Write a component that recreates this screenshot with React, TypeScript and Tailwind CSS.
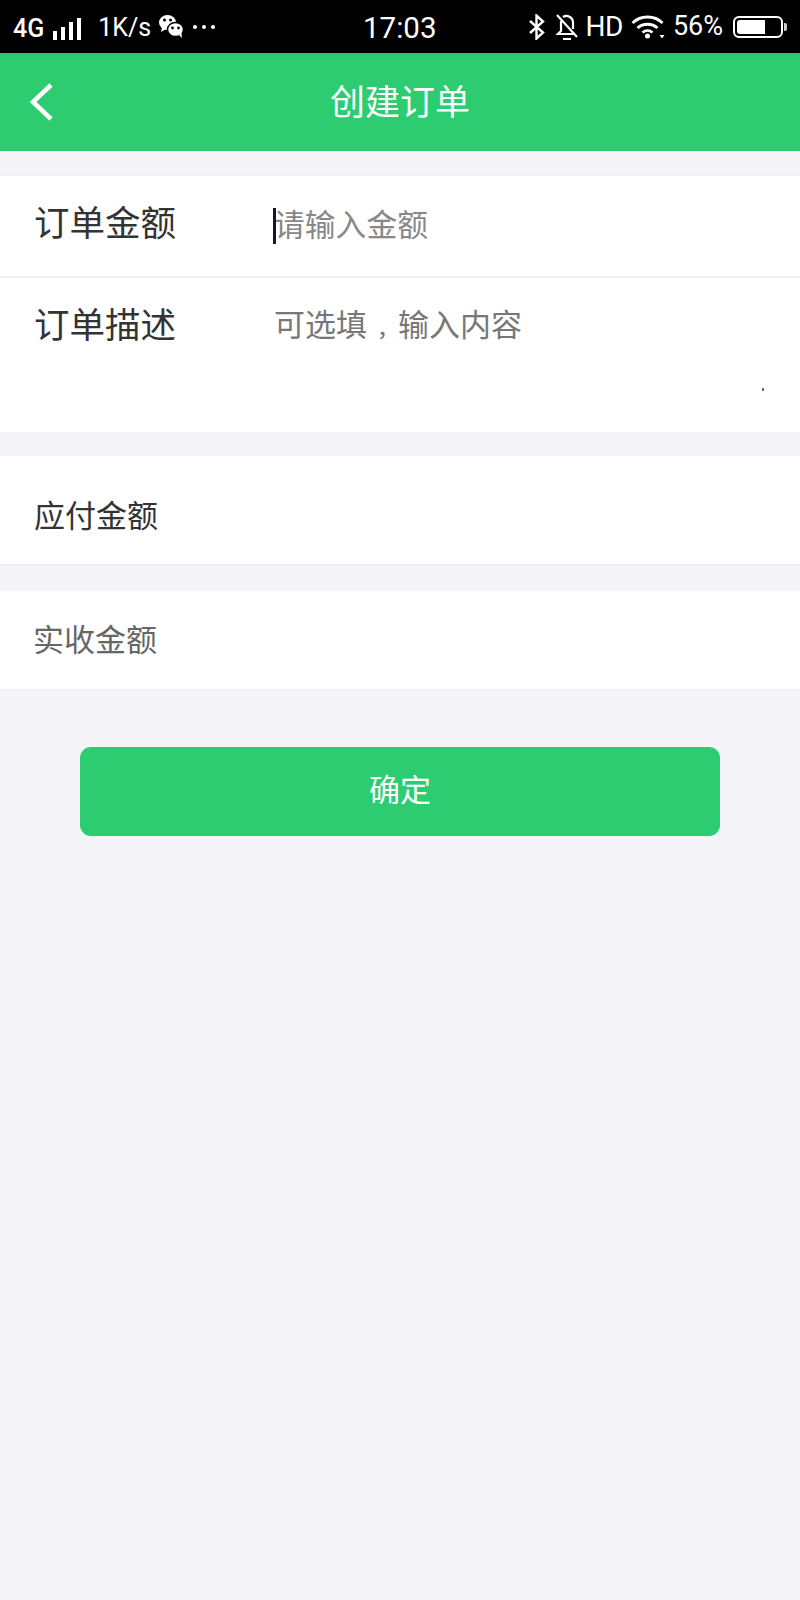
import React from "react";

const cjk = { fontFamily: '"Noto Sans CJK SC", "Noto Sans", sans-serif' };

function WeChat() {
  return (
    <svg width="26" height="26" viewBox="0 0 26 26" className="-mt-px">
      <ellipse cx="9.5" cy="9.5" rx="8.5" ry="7.5" fill="#fff" />
      <path d="M4 14l-1 5 5-3z" fill="#fff" />
      <ellipse cx="17.5" cy="16.5" rx="8" ry="7" fill="#fff" stroke="#000" strokeWidth="1.5" />
      <path d="M21 22l3 3-.5-5z" fill="#fff" />
      <circle cx="6.5" cy="7" r="1.5" fill="#000" />
      <circle cx="12.5" cy="7" r="1.5" fill="#000" />
      <circle cx="14.5" cy="15" r="1.4" fill="#000" />
      <circle cx="20.5" cy="15" r="1.4" fill="#000" />
    </svg>
  );
}

function Signal() {
  return (
    <div className="flex items-end gap-[4px] h-[22px] ml-[9px] mt-[4px]">
      <span className="w-[4px] h-[9px] bg-white" />
      <span className="w-[4px] h-[13px] bg-white" />
      <span className="w-[4px] h-[18px] bg-white" />
      <span className="w-[4px] h-[22px] bg-white" />
    </div>
  );
}

function Bluetooth() {
  return (
    <svg width="20" height="26" viewBox="0 0 18 26" fill="none" stroke="#fff" strokeWidth="2.4">
      <path d="M2 7l13 11.5-6.5 6V1.5L15 7.5 2 19" />
    </svg>
  );
}

function BellOff() {
  return (
    <svg width="24" height="26" viewBox="0 0 24 26" fill="none" stroke="#fff" strokeWidth="2.2">
      <path d="M6 7v10l-3 3h16M18 15V8a6.500 6.500 0 0 0-10-5" />
      <path d="M2 1l20 22" />
      <path d="M8 25h8" />
    </svg>
  );
}

function Wifi() {
  return (
    <svg width="35" height="24" viewBox="0 0 34 24" fill="none" stroke="#fff" strokeWidth="2.8">
      <path d="M1 8c8-8 22-8 30 0" />
      <path d="M6 13c5.500-5 14.500-5 20 0" />
      <path d="M11 17.500c3-2.500 7-2.500 10 0" />
      <circle cx="16" cy="21" r="2.500" fill="#fff" stroke="none" />
      <path d="M28 20h5l-2.500 3.500z" fill="#fff" stroke="none" />
    </svg>
  );
}

function Battery() {
  return (
    <div className="flex items-center">
      <div className="w-[50px] h-[22px] rounded-[6px] border-2 border-white p-[2px] flex">
        <div className="w-[28px] h-full bg-white rounded-l-[3px]" />
      </div>
      <div className="w-[3px] h-[8px] bg-white/80 rounded-r-[2px] ml-px" />
    </div>
  );
}

function StatusBar() {
  const font = { fontFamily: '"Roboto", "Liberation Sans", sans-serif' };
  return (
    <div className="relative h-[53px] bg-black text-white flex items-center justify-between pl-[13px] pr-[13px]" style={font}>
      <div className="flex items-center">
        <span className="text-[25px] font-medium leading-none mt-[4px]">4G</span>
        <Signal />
        <span className="text-[25px] leading-none ml-[17px] mt-px">1K/s</span>
        <span className="ml-[7px]"><WeChat /></span>
        <div className="flex gap-[5px] ml-[9px]">
          <span className="w-[4px] h-[4px] rounded-full bg-white" />
          <span className="w-[4px] h-[4px] rounded-full bg-white" />
          <span className="w-[4px] h-[4px] rounded-full bg-white" />
        </div>
      </div>
      <span className="absolute left-[363px] top-[11px] text-[29.500px] leading-[34px]">17:03</span>
      <div className="flex items-center">
        <Bluetooth />
        <span className="ml-[8px]"><BellOff /></span>
        <span className="ml-[7px] text-[28px] leading-none tracking-[-0.5px]">HD</span>
        <span className="ml-[8px]"><Wifi /></span>
        <span className="ml-[7px] text-[27px] leading-none">56%</span>
        <span className="ml-[10px]"><Battery /></span>
      </div>
    </div>
  );
}

export default function App() {
  return (
    <div className="w-[800px] h-[1600px] bg-[#f4f4f9] flex flex-col" style={cjk}>
      <StatusBar />
      <div className="relative h-[98px] bg-[#2ecc71] flex items-center justify-center text-white">
        <svg width="26" height="40" viewBox="0 0 26 40" fill="none" stroke="#fff" strokeWidth="4.500" className="absolute left-[29px] top-[29px]">
          <path d="M22 3L4 20l18 17" />
        </svg>
        <span className="text-[35px] leading-none -mt-[6px]">创建订单</span>
      </div>

      <div className="mt-[23px] bg-white border-t-2 border-[#f2f2f5]">
        <div className="h-[102px] flex border-b-2 border-[#efeff2]">
          <span className="w-[275px] pl-[34px] text-[35.500px] leading-[40px] pt-[25px] text-[#333333]">订单金额</span>
          <div className="relative flex-1 text-[30.800px] leading-[40px] pt-[27px] text-[#888888]">
            <span className="absolute left-[-2px] top-[32px] w-[3px] h-[36px] bg-[#111827]" />
            <span className="-ml-[1px]">请输入金额</span>
          </div>
        </div>
        <div className="relative h-[155px] flex border-b border-[#f0f0f3]">
          <span className="w-[275px] pl-[34px] text-[35.500px] leading-[40px] pt-[25px] text-[#333333]">订单描述</span>
          <span className="-ml-[1px] text-[31px] leading-[40px] pt-[25px] text-[#777777]">
            可选填<span className="pl-[10px] text-[21px] font-medium">，</span>输入内容
          </span>
          <span className="absolute left-[762px] top-[110px] w-[2px] h-[3px] bg-[#666666]" />
        </div>
      </div>

      <div className="mt-[23px] h-[110px] bg-white border-b-2 border-[#efeff2] flex items-center pl-[34px] pt-[8px]">
        <span className="text-[31px] text-[#333333] leading-[40px]">应付金额</span>
      </div>

      <div className="mt-[25px] h-[100px] bg-white border-b-2 border-[#f0f0f3] flex items-center pl-[33px] pb-[5px]">
        <span className="text-[31px] text-[#666666] leading-[40px]">实收金额</span>
      </div>

      <button className="mt-[56px] mx-[80px] h-[89px] rounded-[11px] bg-[#2ecc71] text-white text-[31px] leading-none flex items-center justify-center pb-[9px]">
        确定
      </button>
    </div>
  );
}
